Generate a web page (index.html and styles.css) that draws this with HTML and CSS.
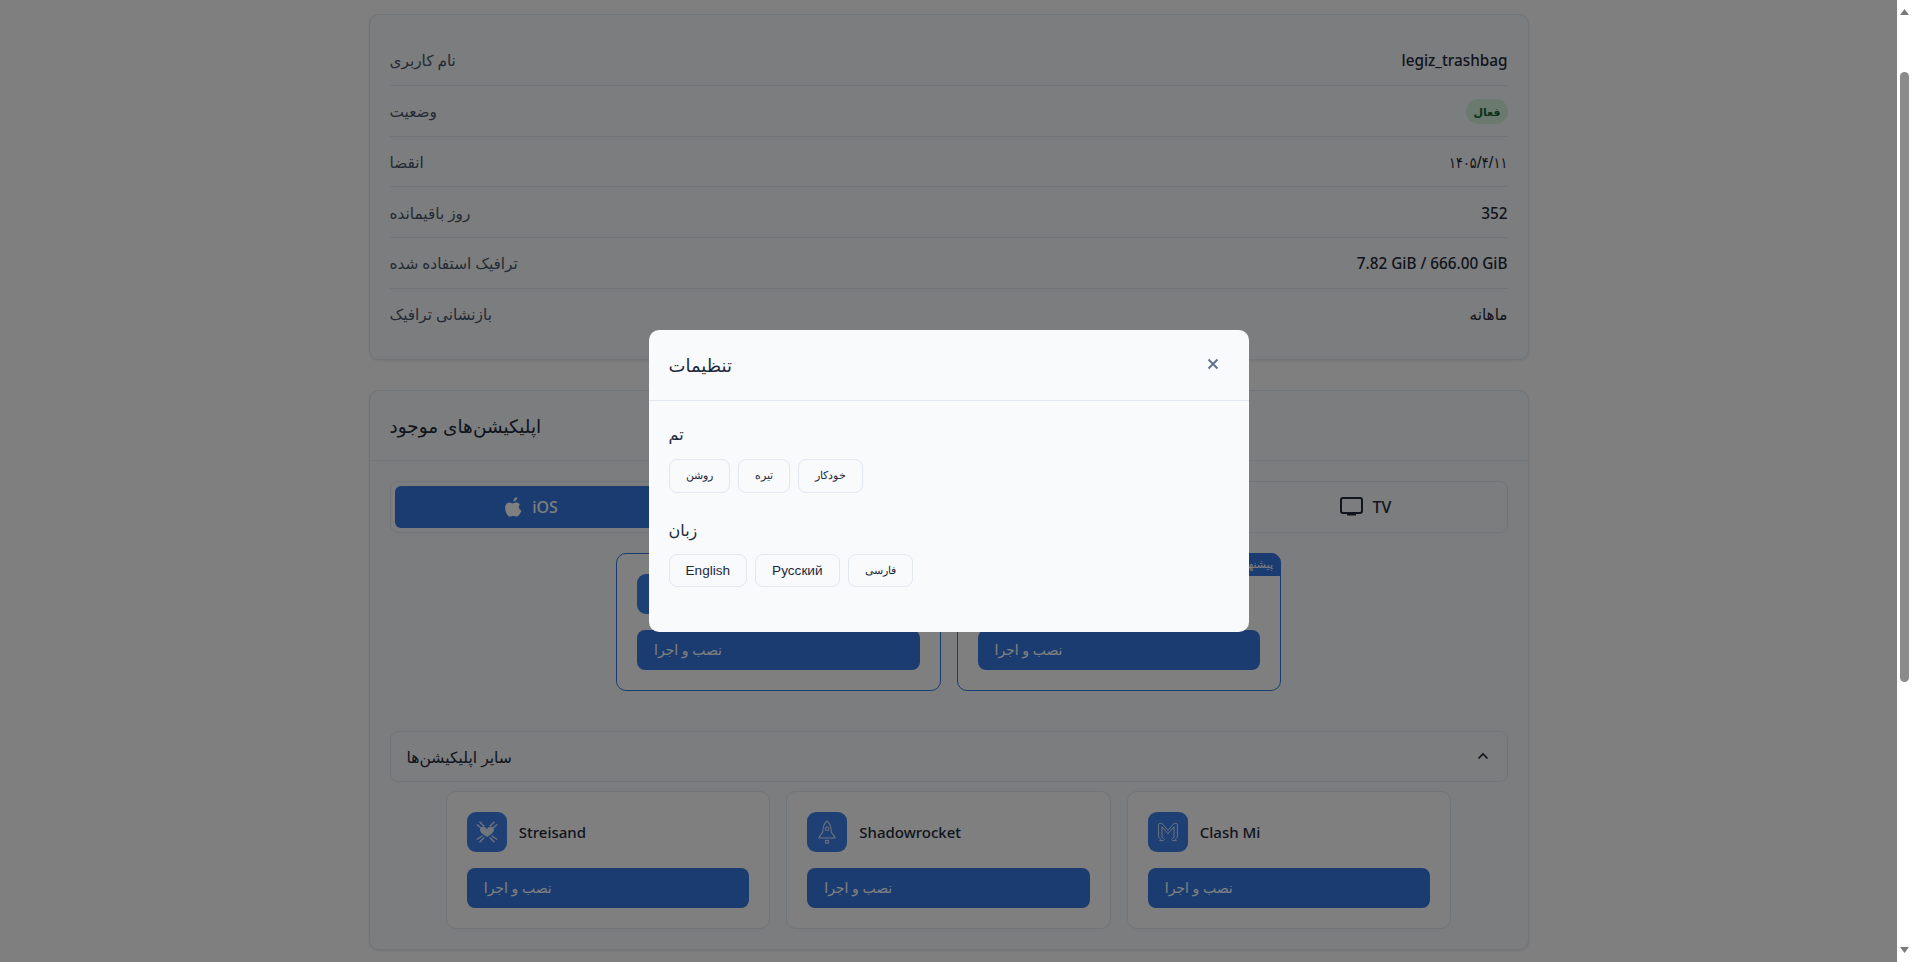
FILE: index.html
```html
<!DOCTYPE html>
<html lang="en">
<head>
    <meta charset="UTF-8">
    <title>Subscription</title>
    <link rel="stylesheet" href="styles.css">
</head>
<body>

    <div class="page">
        <main class="container">
            <section class="card info-card">
                <div class="info-row"><span class="info-label">نام کاربری</span><span class="info-value">legiz_trashbag</span></div>
                <div class="info-row"><span class="info-label">وضعیت</span><span class="status-badge">فعال</span></div>
                <div class="info-row"><span class="info-label">انقضا</span><span class="info-value info-date">۱۴۰۵/۴/۱۱</span></div>
                <div class="info-row"><span class="info-label">روز باقیمانده</span><span class="info-value">352</span></div>
                <div class="info-row"><span class="info-label">ترافیک استفاده شده</span><span class="info-value">7.82 GiB / 666.00 GiB</span></div>
                <div class="info-row"><span class="info-label">بازنشانی ترافیک</span><span class="info-value">ماهانه</span></div>
            </section>

            <section class="card apps-card">
                <h2 class="card-title">اپلیکیشن‌های موجود</h2>
                <div class="card-body">
                    <div class="tabs">
                        <button class="tab active">
                            <svg width="17" height="20" viewBox="0 0 17 20"><path fill="currentColor" d="M12.2 0c.1 1.2-.3 2.2-1 3-.7.9-1.800 1.500-2.800 1.400-.1-1.100.4-2.200 1-2.900C10.100.7 11.300.1 12.200 0zM15.700 6.800c-1.200.8-1.900 1.900-1.900 3.300 0 1.600 1 2.900 2.700 3.600-.4 1.100-.9 2.100-1.600 3.100-1 1.400-1.900 2.800-3.300 2.800-1.300 0-1.800-.8-3.300-.8-1.600 0-2.100.8-3.300.8-1.400.1-2.500-1.500-3.500-2.900C.5 14 -.6 10.300.9 7.700c.8-1.300 2.100-2.100 3.500-2.100 1.300 0 2.500.9 3.300.9.800 0 2.200-1.100 3.700-.9.600 0 2.400.2 3.600 1.900z"/></svg>
                            iOS
                        </button>
                        <button class="tab">Android</button>
                        <button class="tab">Windows</button>
                        <button class="tab">
                            <svg width="23" height="19" viewBox="0 0 23 19"><rect x="1" y="1" width="21" height="15" rx="2" fill="none" stroke="currentColor" stroke-width="2"/><rect x="7" y="16" width="9" height="2.500" fill="currentColor"/></svg>
                            TV
                        </button>
                    </div>

                    <div class="app-grid featured">
                        <div class="app-card">
                            <div class="app-head">
                                <span class="app-icon"></span>
                                <span class="app-name">Happ</span>
                            </div>
                            <button class="install-btn">نصب و اجرا</button>
                        </div>
                        <div class="app-card">
                            <span class="recommend-badge">پیشنهادی</span>
                            <div class="app-head">
                                <span class="app-icon"></span>
                                <span class="app-name">V2Box</span>
                            </div>
                            <button class="install-btn">نصب و اجرا</button>
                        </div>
                    </div>

                    <div class="accordion">
                        <span class="accordion-title">سایر اپلیکیشن‌ها</span>
                        <svg width="12" height="8" viewBox="0 0 12 8"><path d="M1.500 6.500 6 2l4.500 4.500" fill="none" stroke="currentColor" stroke-width="1.600"/></svg>
                    </div>

                    <div class="app-grid">
                        <div class="app-card">
                            <div class="app-head">
                                <span class="app-icon">
                                    <svg width="26" height="26" viewBox="0 0 28 28" fill="none" stroke="#fff" stroke-width="1.400">
                                        <path fill="#fff" stroke="none" d="M14 11c1.500-2 3.200-2.800 5-2.500 2.200.4 3.200 2.700 2.200 4.800-1 2.300-4 4.400-7.200 6-3.200-1.600-6.200-3.700-7.200-6-1-2.100 0-4.400 2.200-4.800 1.800-.3 3.500.5 5 2.500z"/>
                                        <path d="M3 6l5 4M25 6l-5 4M6 3l5 5M22 3l-5 5M3 22l6-4M25 22l-6-4M6 25l5-5M22 25l-5-5"/>
                                    </svg>
                                </span>
                                <span class="app-name">Streisand</span>
                            </div>
                            <button class="install-btn">نصب و اجرا</button>
                        </div>
                        <div class="app-card">
                            <div class="app-head">
                                <span class="app-icon">
                                    <svg width="26" height="26" viewBox="0 0 28 28" fill="none" stroke="#fff" stroke-width="1.100">
                                        <path d="M14 2c-3.500 3-4.500 6.500-4.500 12L5.500 19.500v1h17v-1L18.500 14c0-5.500-1-9-4.500-12z"/>
                                        <circle cx="14" cy="10.500" r="2"/>
                                        <rect x="12.500" y="23" width="3" height="3"/>
                                    </svg>
                                </span>
                                <span class="app-name">Shadowrocket</span>
                            </div>
                            <button class="install-btn">نصب و اجرا</button>
                        </div>
                        <div class="app-card">
                            <div class="app-head">
                                <span class="app-icon">
                                    <svg width="24" height="24" viewBox="0 0 28 28" fill="none" stroke="#fff" stroke-width="1.100">
                                        <path d="M3 20V5.500Q3 4 5 4h2l7 8 7-8h2q2 0 2 1.500V20M7 20V8l7 8 7-8v12"/>
                                        <path d="M3 20l3 3M7 20l3 3M25 20l-3 3M21 20l-3 3M4 24h5M19 24h5"/>
                                    </svg>
                                </span>
                                <span class="app-name">Clash Mi</span>
                            </div>
                            <button class="install-btn">نصب و اجرا</button>
                        </div>
                    </div>
                </div>
            </section>
        </main>

        <div class="modal-overlay">
            <div class="modal">
                <div class="modal-header">
                    <h3 class="modal-title">تنظیمات</h3>
                    <svg class="modal-close" width="12" height="12" viewBox="0 0 12 12"><path d="M1.500 1.500l9 9M10.500 1.500l-9 9" stroke="currentColor" stroke-width="2" fill="none"/></svg>
                </div>
                <div class="modal-body">
                    <h4 class="option-title">تم</h4>
                    <div class="option-list">
                        <button class="option-btn fa">روشن</button>
                        <button class="option-btn fa">تیره</button>
                        <button class="option-btn fa">خودکار</button>
                    </div>
                    <h4 class="option-title">زبان</h4>
                    <div class="option-list">
                        <button class="option-btn">English</button>
                        <button class="option-btn">Русский</button>
                        <button class="option-btn fa">فارسی</button>
                    </div>
                </div>
            </div>
        </div>
    </div>

    <!-- the window scrollbar -->
    <div class="scrollbar">
        <svg class="scroll-arrow" width="9" height="6" viewBox="0 0 9 6"><path d="M4.500 0 9 6H0z"/></svg>
        <div class="scroll-thumb"></div>
        <svg class="scroll-arrow bottom" width="9" height="6" viewBox="0 0 9 6"><path d="M4.500 6 0 0h9z"/></svg>
    </div>

</body>
</html>
```
FILE: styles.css
```css
* {
    box-sizing: border-box;
}

body {
    margin: 0;
    height: 100vh;
    display: flex;
    overflow: hidden;
    background: #fff;
    font-family: "Noto Sans", "DejaVu Sans", sans-serif;
    color: #1e293b;
}

.page {
    position: relative;
    flex: 1;
    overflow: hidden;
}

.scrollbar {
    width: 15px;
    display: flex;
    flex-direction: column;
    align-items: center;
    background: #fff;
}

.scroll-arrow {
    display: block;
    margin-top: 9px;
    fill: #7a7a7a;
}

.scroll-arrow.bottom {
    margin-top: auto;
    margin-bottom: 9px;
}

.scroll-thumb {
    width: 9px;
    height: 610px;
    margin-top: 57px;
    background: #8b8b8b;
    border-radius: 5px;
}

.container {
    width: 1160px;
    margin: 0 auto;
    padding-top: 14px;
    display: flex;
    flex-direction: column;
    gap: 30px;
}

.card {
    background: #f8fafc;
    border: 1px solid #e2e8f0;
    border-radius: 10px;
    box-shadow: 0 1px 3px rgba(0, 0, 0, 0.1);
}

.info-card {
    padding: 20px;
}

.info-row {
    display: flex;
    justify-content: space-between;
    align-items: center;
    height: 50.75px;
    padding-top: 1px;
    border-bottom: 1px solid #e2e8f0;
    font-size: 15.3px;
}

.info-row:last-child {
    border-bottom: none;
    height: 49.75px;
}

.info-label {
    color: #475569;
}

.info-value {
    font-weight: 500;
}

.info-date {
    display: block;
    transform: scaleX(0.84);
    transform-origin: right center;
}

.status-badge {
    display: block;
    padding: 5px 7px;
    font-size: 11px;
    font-weight: 600;
    color: #166534;
    background: #d4f5dc;
    border-radius: 14px;
}

.card-title {
    margin: 0;
    height: 70px;
    padding: 0 20px;
    display: flex;
    align-items: center;
    font-size: 18.5px;
    font-weight: 500;
    border-bottom: 1px solid #e2e8f0;
}

.card-body {
    padding: 20px;
}

.tabs {
    display: flex;
    gap: 4px;
    padding: 4px;
    border: 1px solid #e2e8f0;
    border-radius: 8px;
    margin-bottom: 20px;
}

.tab {
    flex: 1;
    height: 42px;
    display: flex;
    align-items: center;
    justify-content: center;
    gap: 10px;
    border: none;
    border-radius: 6px;
    background: transparent;
    color: #1e293b;
    font-family: inherit;
    font-size: 16px;
    font-weight: 500;
}

.tab.active {
    background: #3679e0;
    color: #fff;
}

.app-grid {
    display: flex;
    justify-content: center;
    gap: 16px;
}

.app-card {
    position: relative;
    width: 324.5px;
    padding: 20px;
    background: #fff;
    border: 1px solid #e2e8f0;
    border-radius: 10px;
}

.featured .app-card {
    border-color: #3679e0;
}

.recommend-badge {
    position: absolute;
    top: -1px;
    right: -1px;
    padding: 3px 8px;
    height: 23px;
    font-size: 11px;
    color: #fff;
    background: #3679e0;
    border-radius: 0 10px 0 6px;
}

.app-head {
    display: flex;
    align-items: center;
    gap: 12px;
    margin-bottom: 16px;
}

.app-icon {
    width: 40px;
    height: 40px;
    display: flex;
    align-items: center;
    justify-content: center;
    background: #3e80e8;
    border-radius: 9px;
}

.app-icon svg {
    opacity: 0.85;
}

.app-name {
    font-size: 15px;
    font-weight: 500;
}

.install-btn {
    display: block;
    width: 100%;
    height: 40px;
    padding: 0 17px;
    border: none;
    border-radius: 8px;
    background: #3679e0;
    color: #fff;
    font-family: inherit;
    font-size: 14px;
    text-align: left;
}

.accordion {
    height: 51px;
    margin-top: 40px;
    margin-bottom: 9px;
    padding: 0 18px 0 16px;
    display: flex;
    align-items: center;
    justify-content: space-between;
    border: 1px solid #e2e8f0;
    border-radius: 8px;
    font-size: 15.6px;
    font-weight: 500;
}

.accordion-title {
    padding-top: 2px;
}

/* settings dialog */
.modal-overlay {
    position: absolute;
    inset: 0;
    display: flex;
    align-items: center;
    justify-content: center;
    background: rgba(0, 0, 0, 0.5);
}

.modal {
    width: 600px;
    height: 302px;
    background: #f8fafc;
    border-radius: 10px;
}

.modal-header {
    height: 71px;
    padding: 0 24px 0 20px;
    display: flex;
    align-items: center;
    justify-content: space-between;
    border-bottom: 1px solid #e2e8f0;
}

.modal-title {
    margin: 0;
    font-size: 18px;
    font-weight: 500;
}

.modal-close {
    color: #64748b;
    margin-right: 6px;
    margin-top: -3px;
}

.modal-body {
    padding: 22px 20px 20px;
}

.option-title {
    margin: 0 0 14px;
    font-size: 16px;
    font-weight: 500;
}

.option-list {
    display: flex;
    gap: 8px;
    margin-bottom: 26px;
}

.option-list + .option-title {
    margin-bottom: 13px;
}

.option-btn {
    height: 33.5px;
    padding: 0 16px;
    background: #f8fafc;
    border: 1px solid #e2e8f0;
    border-radius: 8px;
    color: #1e293b;
    font-family: "Liberation Sans", sans-serif;
    font-size: 13.6px;
}

.option-btn.fa {
    font-size: 11.3px;
}
```
